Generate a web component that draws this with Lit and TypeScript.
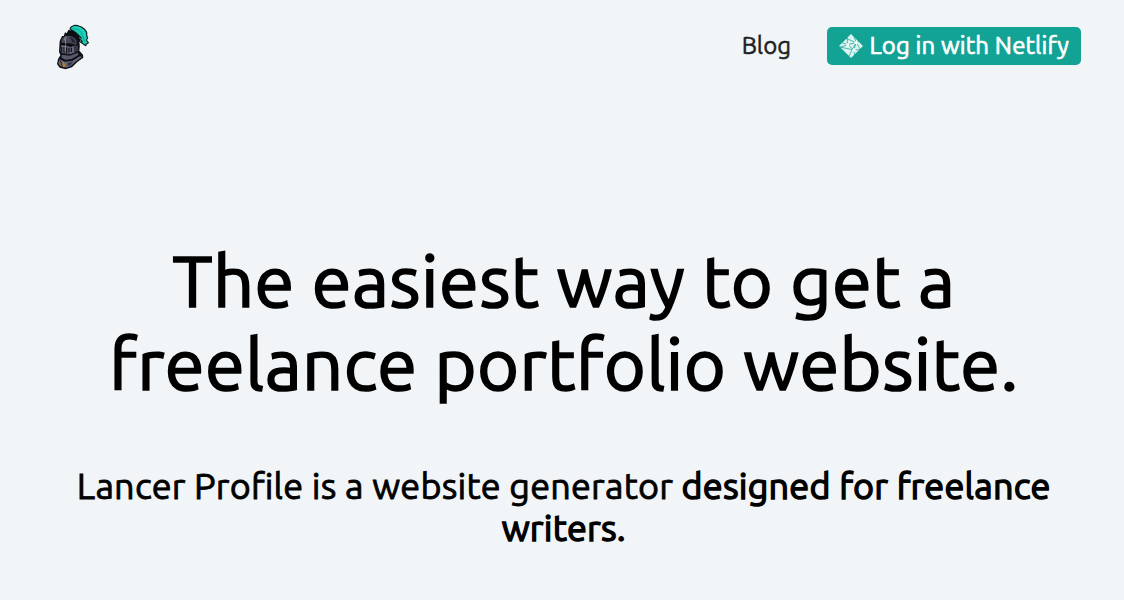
import { LitElement, html, css, svg } from "lit";
import { customElement } from "lit/decorators.js";

@customElement("knight-logo")
class KnightLogo extends LitElement {
  static styles = css`
    :host { display: block; width: 46px; height: 58px; }
    svg { display: block; width: 100%; height: 100%; }
  `;

  render() {
    return html`<svg viewBox="0 0 138 174" aria-label="Lancer Profile">
      ${svg`
      <path d="M31 68 L36 54 L41 55 L45 43 L50 46 L55 36 L62 37 L68 34 L78 44 L88 54 L92 76 L86 70 L60 60Z" fill="#0b0d10"/>
      <path d="M60 33 L63 27 L74 22 L84 23 L94 27 L104 34 L110 43 L110 52 L113 60 L109 66 L115 74 L109 78 L107 83 L101 79 L92 72 L97 70 L92 66 L93 60 L87 53 L80 46 L70 39Z" fill="#1bd0b9" stroke="#08201f" stroke-width="3.5" stroke-linejoin="round"/>
      <path d="M68 32 Q88 32 98 47 M92 46 Q101 56 104 71" fill="none" stroke="#0d8377" stroke-width="1.8"/>
      <path d="M29 70 Q32 56 48 50 Q70 44 84 62 Q92 75 88 98 L99 110 L100 119 L83 131 L66 148 L47 154 L29 149 L21 138 L24 123 L31 112 L27 101Z" fill="#121319"/>
      <path d="M34 66 Q40 54 55 54 Q72 53 80 69 L79 81 L64 76 L35 75Z" fill="#454757"/>
      <path d="M41 65 L44 56 L51 54 L47 69Z" fill="#747689"/>
      <path d="M60 57 Q74 62 77 76 L67 72Z" fill="#23242e"/>
      <path d="M34 81 L65 84 L79 87 L75 103 L62 108 L36 105 L31 98Z" fill="#646679"/>
      <path d="M31 78 L48 80 L65 85" stroke="#08090c" stroke-width="5" fill="none"/>
      <path d="M35 87V102 M42 88V104 M50 88V105 M57 89V104 M64 89V102" stroke="#111218" stroke-width="3.6"/>
      <path d="M46 64 L47 80 L45 98" stroke="#a1a2b3" stroke-width="2" fill="none"/>
      <path d="M71 82 L84 83 L84 99 L72 102Z" fill="#363745"/>
      <path d="M36 110 L60 113 L83 104 L86 112 L67 124 L47 126 L34 120Z" fill="#56586b"/>
      <path d="M28 124 L45 131 L66 129 L90 115 L96 117 L79 129 L62 144 L47 149 L30 144 L25 136Z" fill="#64667b"/>
      <path d="M30 119 L45 128 L66 125 L89 111" stroke="#0d0e13" stroke-width="4" fill="none"/>
      <path d="M53 134 Q62 135 70 130 L61 141 L53 144Z" fill="#30313f"/>
      <path d="M37 132 L43 135 L46 143 L41 148 L36 141Z" fill="#bd7f26"/>
      <path d="M29 127 L35 135 L36 146" stroke="#17181f" stroke-width="2.5" fill="none"/>`}
    </svg>`;
  }
}

@customElement("netlify-mark")
class NetlifyMark extends LitElement {
  static styles = css`
    :host { display: block; width: 26px; height: 26px; }
    svg { display: block; width: 100%; height: 100%; }
  `;

  render() {
    return html`<svg viewBox="0 0 78 78" aria-hidden="true">
      ${svg`
      <path d="M39 3 L75 39 L39 75 L3 39Z" fill="#dcf4f0"/>
      <g stroke="#13a395" stroke-width="2.6" stroke-opacity=".85" fill="none">
        <path d="M22 15 L54 29 L33 69"/>
        <path d="M9 28 L29 35 L54 29 L48 8"/>
        <path d="M1 45 L29 35 L27 12"/>
        <path d="M29 35 L48 51 L54 29 L66 24"/>
        <path d="M1 41 L48 51 L68 50"/>
        <path d="M54 29 L68 50"/>
        <path d="M48 51 L50 68"/>
      </g>
      <circle cx="29" cy="35" r="4.5" fill="#fff"/>
      <circle cx="54" cy="29" r="5" fill="#fff"/>
      <circle cx="48" cy="51" r="5" fill="#fff"/>`}
    </svg>`;
  }
}

@customElement("app-root")
class AppRoot extends LitElement {
  static styles = css`
    :host {
      display: block;
      min-height: 600px;
      box-sizing: border-box;
      overflow: hidden;
      background: #f1f5f8;
      color: #000;
      font-family: Ubuntu, "Noto Sans", sans-serif;
    }
    header {
      display: flex;
      align-items: center;
      height: 58px;
      padding: 18px 43px 0 50px;
    }
    nav {
      display: flex;
      align-items: center;
      gap: 36px;
      margin-left: auto;
      font-size: 24px;
      line-height: 38px;
      transform: translateY(-1px);
    }
    a { color: inherit; text-decoration: none; }
    .blog { color: #1d1f22; -webkit-text-stroke: 0.5px; }
    .login {
      display: flex;
      align-items: center;
      box-sizing: border-box;
      width: 254px;
      height: 38px;
      padding-left: 11px;
      gap: 5.5px;
      border-radius: 5px;
      background: #13a395;
      color: #fff;
      letter-spacing: 0.14px;
      white-space: nowrap;
      -webkit-text-stroke: 0.7px;
    }
    main { text-align: center; }
    h1, p { margin: 0; font-weight: 400; }
    h1 {
      padding: 163px 60px 0 64px;
      font-size: 72px;
      line-height: 83px;
      letter-spacing: 0.44px;
      -webkit-text-stroke: 1.7px;
    }
    p {
      padding: 60px 58px 0 61.5px;
      font-size: 36px;
      line-height: 42px;
      letter-spacing: 0.21px;
      font-feature-settings: "liga" 1;
      -webkit-text-stroke: 0.85px;
    }
    .strong { -webkit-text-stroke: 1.4px; }
  `;

  render() {
    return html`
      <header>
        <knight-logo></knight-logo>
        <nav>
          <a class="blog">Blog</a>
          <a class="login"><netlify-mark></netlify-mark><span>Log in with Netlify</span></a>
        </nav>
      </header>
      <main>
        <h1>The easiest way to get a freelance portfolio website.</h1>
        <p>
          <span>Lancer Profile is a website generator</span>
          <span class="strong">designed for freelance</span>
          <span class="strong">writers.</span>
        </p>
      </main>
    `;
  }
}
